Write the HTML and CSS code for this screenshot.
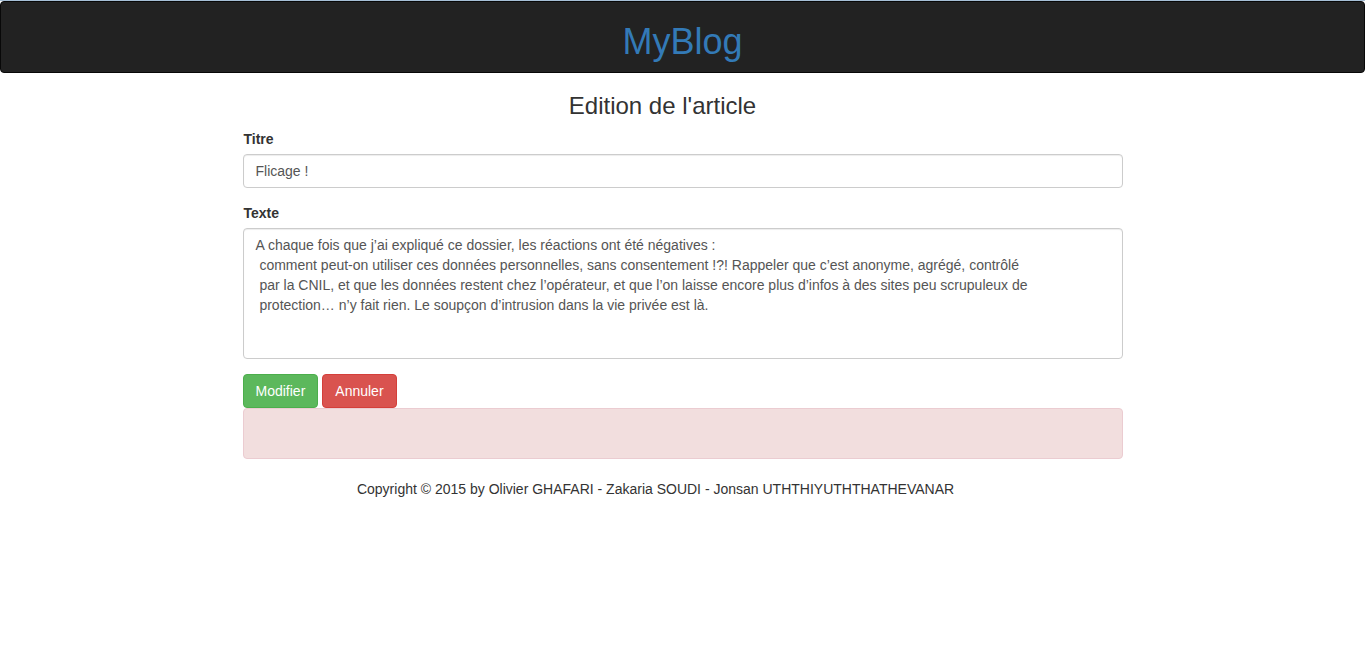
FILE: index.html
```html
<!DOCTYPE html>
<html lang="fr">
<head>
<meta charset="utf-8">
<title>MyBlog</title>
<link rel="stylesheet" href="styles.css">
</head>
<body>
<header class="navbar"><h1 class="brand"><a href="#">MyBlog</a></h1></header>
<main class="container">
<h2 class="page-title">Edition de l'article</h2>
<form class="form">
<div class="form-group">
<label for="titre">Titre</label>
<input class="form-control" id="titre" type="text" value="Flicage !">
</div>
<div class="form-group">
<label for="texte">Texte</label>
<textarea class="form-control" id="texte" rows="6">A chaque fois que j’ai expliqué ce dossier, les réactions ont été négatives :
 comment peut-on utiliser ces données personnelles, sans consentement !?! Rappeler que c’est anonyme, agrégé, contrôlé
 par la CNIL, et que les données restent chez l’opérateur, et que l’on laisse encore plus d’infos à des sites peu scrupuleux de
 protection… n’y fait rien. Le soupçon d’intrusion dans la vie privée est là.</textarea>
</div>
<div class="actions">
<button class="btn btn-success" type="button">Modifier</button>
<button class="btn btn-danger" type="button">Annuler</button>
</div>
</form>
<div class="alert" role="alert"></div>
<footer class="footer">Copyright © 2015 by Olivier GHAFARI - Zakaria SOUDI - Jonsan UTHTHIYUTHTHATHEVANAR</footer>
</main>
</body>
</html>
```
FILE: styles.css
```css
* { box-sizing: border-box; }
body {
  margin: 0;
  border-top: 1px solid #a6bfd6;
  background: #fff;
  color: #333;
  font: 14px/20px "Liberation Sans", Arial, sans-serif;
}
.navbar {
  padding: 20px 0 10px;
  border: 1px solid #080808;
  border-radius: 4px;
  background: #222;
  text-align: center;
}
.brand { margin: 0; font-size: 36px; font-weight: 500; line-height: 40px; }
.brand a { color: #337ab7; text-decoration: none; }
.container { width: 100%; max-width: 880px; margin: 0 auto; }
.page-title {
  margin: 20px 0 10px;
  padding-right: 40px;
  font-size: 24px;
  font-weight: 500;
  line-height: 26px;
  text-align: center;
}
.form-group { margin-bottom: 15px; }
.form-group label { display: block; margin-bottom: 5px; padding-left: 1px; font-weight: 700; }
.form-control {
  display: block;
  width: 100%;
  padding: 6px 12px;
  border: 1px solid #ccc;
  border-radius: 4px;
  background: #fff;
  box-shadow: inset 0 1px 1px rgba(0, 0, 0, .075);
  color: #555;
  font: inherit;
}
input.form-control { height: 34px; }
textarea.form-control { height: 131px; resize: none; overflow: auto; }
.actions { display: flex; gap: 4px; }
.btn {
  padding: 6px 12px;
  border: 1px solid;
  border-radius: 4px;
  color: #fff;
  font: inherit;
}
.btn-success { border-color: #4cae4c; background: #5cb85c; }
.btn-danger { border-color: #d43f3a; background: #d9534f; }
.alert {
  min-height: 51px;
  margin-bottom: 20px;
  border: 1px solid #ebccd1;
  border-radius: 4px;
  background: #f2dede;
}
.footer { padding-right: 54px; text-align: center; }
```
